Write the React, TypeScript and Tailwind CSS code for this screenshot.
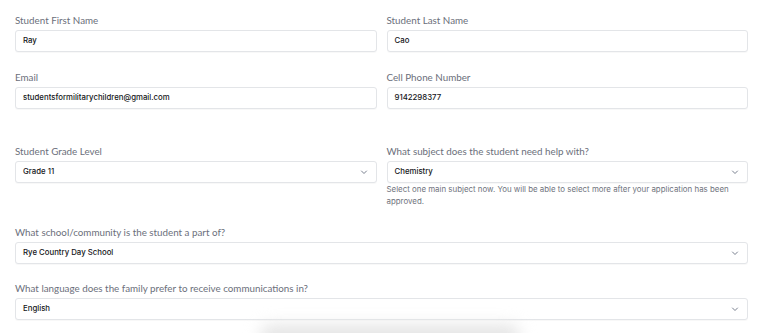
import { ReactNode } from "react";

type FieldProps = {
  label: string;
  value: string;
  select?: boolean;
  help?: ReactNode;
};

function Chevron() {
  return (
    <svg width="8" height="8" viewBox="0 0 8 8" fill="none" className="text-gray-500">
      <path d="M1.5 3l2.5 2.5L6.5 3" stroke="currentColor" strokeWidth="0.9" strokeLinecap="round" strokeLinejoin="round" />
    </svg>
  );
}

function Field({ label, value, select, help }: FieldProps) {
  return (
    <div className="flex flex-col">
      <label className="h-[14px] font-['Lato',sans-serif] text-[9.8px] leading-[14px] text-[#6b6f7b]">{label}</label>
      <div className="mt-[3px] flex h-[22px] items-center justify-between rounded-[3px] border border-[#e3e5e8] bg-white pl-[7px] pr-[8px] shadow-[0_1px_1px_rgba(0,0,0,0.03)]">
        <span className="text-[7.8px] font-medium text-[#141519]">{value}</span>
        {select ? <Chevron /> : null}
      </div>
      {help ? (
        <p className="text-[7.9px] leading-[12px] text-[#6f737d]">{help}</p>
      ) : null}
    </div>
  );
}

export default function App() {
  return (
    <div
      className="relative h-[333px] w-[768px] overflow-hidden bg-white pl-[15px] pr-[20px] pt-[13px]"
      style={{ fontFamily: "Inter, 'Open Sans', sans-serif" }}
    >
      <div className="grid grid-cols-2 gap-x-[10px] gap-y-[18px]">
        <Field label="Student First Name" value="Ray" />
        <Field label="Student Last Name" value="Cao" />
        <Field label="Email" value="studentsformilitarychildren@gmail.com" />
        <Field label="Cell Phone Number" value="9142298377" />
      </div>

      <div className="mt-[35px] grid grid-cols-2 items-start gap-x-[10px]">
        <Field label="Student Grade Level" value="Grade 11" select />
        <Field
          label="What subject does the student need help with?"
          value="Chemistry"
          select
          help="Select one main subject now. You will be able to select more after your application has been approved."
        />
      </div>

      <div className="mt-[18px] flex flex-col gap-[17px]">
        <Field label="What school/community is the student a part of?" value="Rye Country Day School" select />
        <Field label="What language does the family prefer to receive communications in?" value="English" select />
      </div>

      <div className="absolute bottom-[-14px] left-[260px] h-[22px] w-[260px] rounded-full bg-[#e4e4e4] blur-[8px]" />
    </div>
  );
}
